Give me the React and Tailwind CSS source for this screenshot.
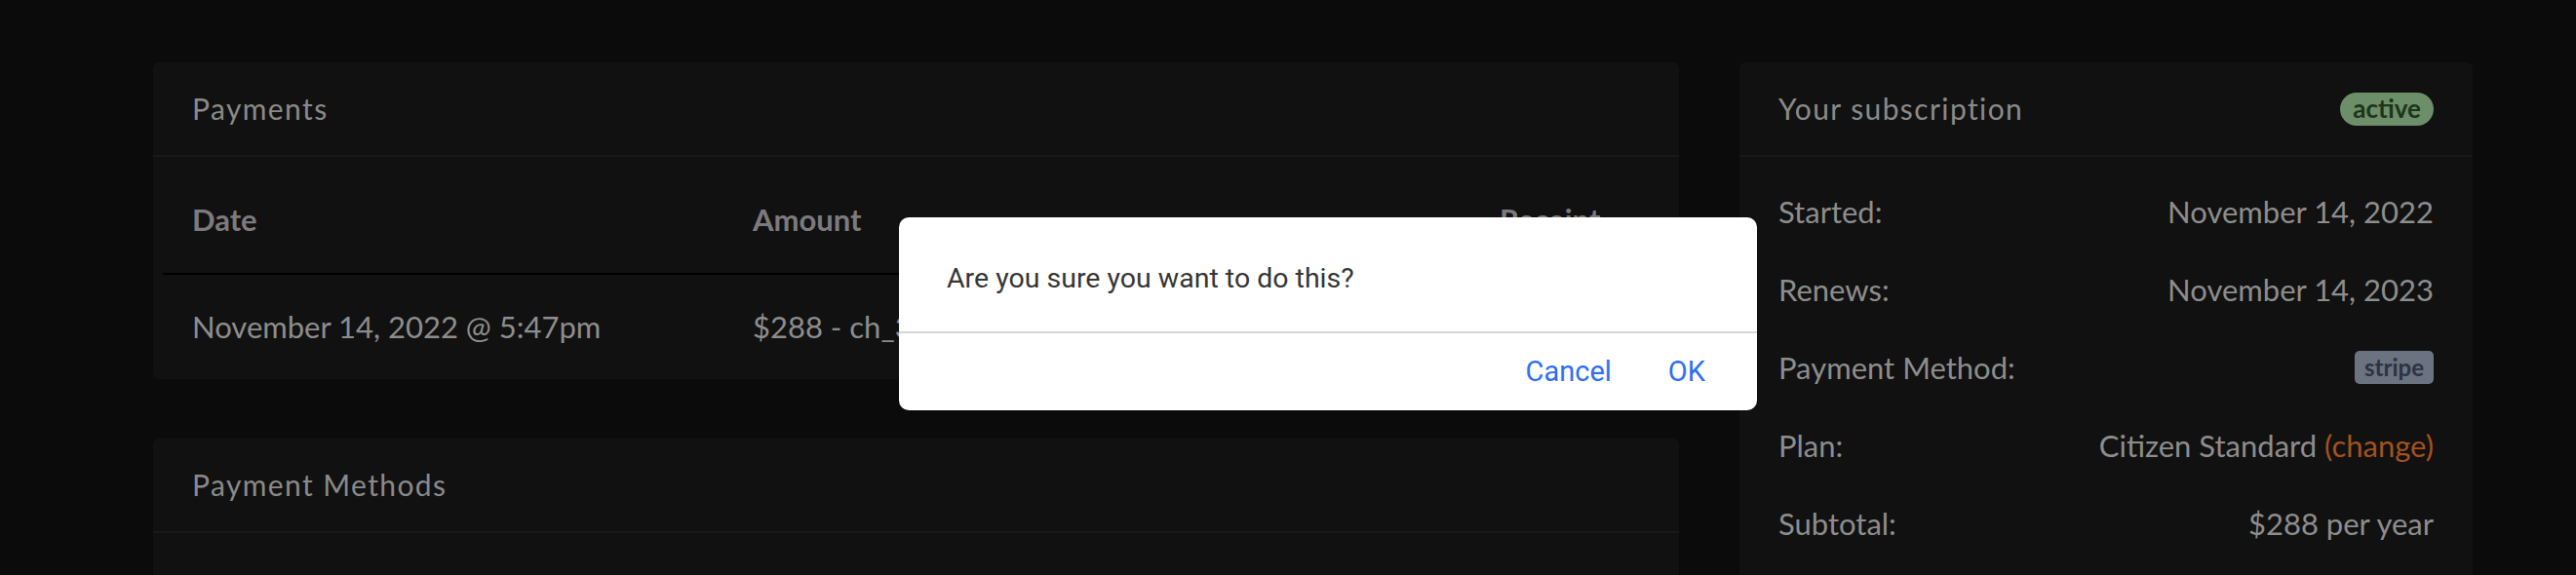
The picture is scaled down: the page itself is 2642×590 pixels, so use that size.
import React from 'react';

const rows = [
  { label: 'Started:', value: 'November 14, 2022' },
  { label: 'Renews:', value: 'November 14, 2023' },
  { label: 'Payment Method:', badge: 'stripe' },
  { label: 'Plan:', plan: 'Citizen Standard' },
  { label: 'Subtotal:', value: '$288 per year' },
];

const Card = ({ title, right, children, className = '' }) => (
  <div className={`bg-[#111111] rounded-[6px] ${className}`}>
    <div className="h-[97px] flex items-center justify-between px-[40px] border-b-2 border-[#191919]">
      <h2 className="text-[30px] tracking-[1.4px] text-[#8a8a8a] font-normal">{title}</h2>
      {right}
    </div>
    {children}
  </div>
);

const ConfirmDialog = () => (
  <div className="absolute left-[922px] top-[223px] w-[880px] h-[198px] bg-white rounded-[10px] flex flex-col font-['Roboto',sans-serif]">
    <div className="h-[117px] pl-[49px] pt-[45px]">
      <p className="text-[28.5px] leading-[36px] text-[#363636]">Are you sure you want to do this?</p>
    </div>
    <div className="h-[2px] bg-[#d6d6d6]" />
    <div className="flex-1 flex items-center justify-end gap-[58px] pr-[53px] text-[29px] text-[#2f6ef2]">
      <button>Cancel</button>
      <button>OK</button>
    </div>
  </div>
);

const App = () => {
  return (
    <div className="relative w-[2642px] h-[590px] overflow-hidden bg-[#0b0b0b] font-['Lato',sans-serif]">
      <div className="flex pl-[157px] pt-[64px]">
        {/* left column */}
        <div className="w-[1565px] flex flex-col gap-[61px]">
          <Card title="Payments">
            <div className="px-[10px] pt-[10px]">
              <table className="w-full text-left">
                <thead>
                  <tr className="h-[110px] border-b-2 border-black">
                    <th className="w-[575px] pl-[30px] text-[31px] font-bold text-[#7d7a7e]">Date</th>
                    <th className="pl-[30px] text-[31px] font-bold text-[#7d7a7e]">Amount</th>
                    <th className="w-[204px] pl-[30px] text-[31px] font-bold text-[#7d7a7e]">Receipt</th>
                  </tr>
                </thead>
                <tbody>
                  <tr className="h-[108px]">
                    <td className="pl-[30px] text-[31px] text-[#8d8d8d]">November 14, 2022 @ 5:47pm</td>
                    <td className="pl-[30px] text-[31px] text-[#8d8d8d]">$288 - ch_3M4AbcDEfGhIjK</td>
                    <td className="pl-[30px] text-[31px] text-[#8d8d8d]">View</td>
                  </tr>
                </tbody>
              </table>
            </div>
          </Card>
          <Card title="Payment Methods" className="h-[200px]" />
        </div>

        {/* right column */}
        <div className="w-[752px] ml-[62px]">
          <Card
            title="Your subscription"
            className="h-[600px]"
            right={
              <span className="h-[34px] px-[13px] flex items-center rounded-full bg-[#6c8e69] text-[#1c361b] text-[26px] font-bold">
                active
              </span>
            }
          >
            <div className="pt-[16px] px-[40px]">
              {rows.map((r) => (
                <div key={r.label} className="h-[80px] flex items-center justify-between text-[31px] text-[#8d8d8d]">
                  <span>{r.label}</span>
                  {r.value && <span>{r.value}</span>}
                  {r.badge && (
                    <span className="h-[34px] px-[10px] flex items-center rounded-[5px] bg-[#6b7280] text-[#2c3444] text-[24px] font-bold">
                      {r.badge}
                    </span>
                  )}
                  {r.plan && (
                    <span>
                      {r.plan} <span className="text-[#a3521e]">(change)</span>
                    </span>
                  )}
                </div>
              ))}
            </div>
          </Card>
        </div>
      </div>

      <ConfirmDialog />
    </div>
  );
};

export default App;
